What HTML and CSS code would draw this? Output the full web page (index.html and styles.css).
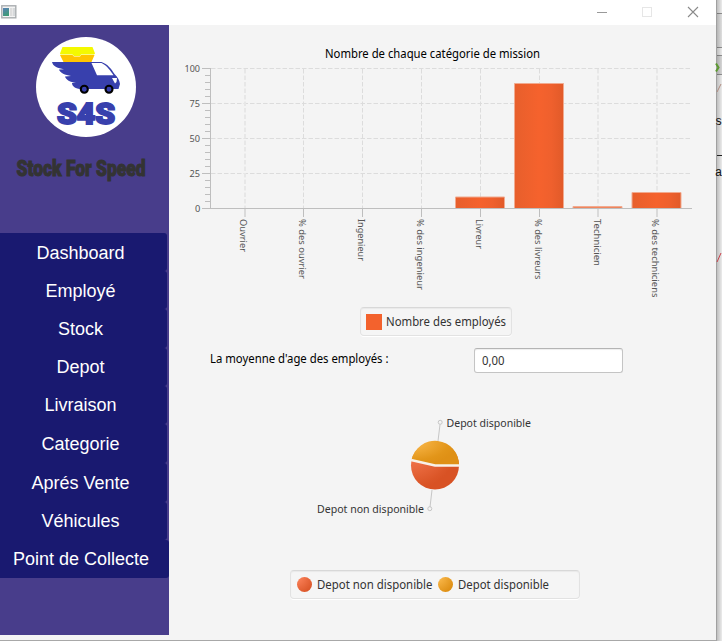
FILE: index.html
```html
<!DOCTYPE html>
<html lang="fr">
<head>
<meta charset="utf-8">
<title>Stock For Speed</title>
<link rel="stylesheet" href="styles.css">
</head>
<body>
<div class="desktop">
<div class="window">
  <header class="titlebar">
    <svg class="app-icon" width="16" height="14" viewBox="0 0 16 14">
      <defs><linearGradient id="ico" x2="0.4" y2="1"><stop stop-color="#5a80b8"/><stop offset="1" stop-color="#3f9a78"/></linearGradient></defs>
      <rect x="0.8" y="0.8" width="14" height="12" fill="#f4f4f4" stroke="#a9adb0" stroke-width="1.4"/>
      <rect x="2" y="3" width="6" height="8" fill="url(#ico)"/>
      <rect x="9" y="3" width="2.5" height="8" fill="#dcdcdc"/>
      <rect x="12.3" y="3" width="1.4" height="8" fill="#c9cdd0"/>
    </svg>
    <svg class="controls" width="102" height="13" viewBox="597 6 102 13" fill="none">
      <path d="M597 12.5h10" stroke="#999"/>
      <rect x="642.5" y="7.5" width="9" height="9" stroke="#e6e6e6"/>
      <path d="M688 7l10 10M698 7l-10 10" stroke="#8a8a8a" stroke-width="1.1"/>
    </svg>
  </header>
  <div class="content">
    <aside class="sidebar">
      <svg class="logo" width="169" height="208" viewBox="0 25 169 208">
        <circle cx="86" cy="87" r="50" fill="#fff"/>
        <path d="M62.5 47h30l2.5 6.5-1 1H81l-1 1.5h-6l-1.500-1.500H60.500l-.5-1z" fill="#f4f900"/>
        <path d="M60 55h12.500l1.500 1.500h6l1-1.500h13.500l-3 7h-28z" fill="#ffc400"/>
        <path d="M52 62h49.500c6 2 10 7 13 12 3.500 3 5 7 5.500 10l-1.500 5H80c-5-.5-8-3-8-6l4-.2c-6-.8-10-2.800-11-6.300l6-.5c-6-1-11-3-12-6.500l5-.3c-6-.9-11-2.500-12-7.200z" fill="#3840ad"/>
        <path d="M91.500 63h10c6 3 9 8 12 12.200H97z" fill="#fff"/>
        <path d="M112 78h5l-.5 4-1.500 1.500z" fill="#fff"/>
        <circle cx="84.300" cy="89.300" r="3.500" fill="#3840ad" stroke="#000" stroke-width="2.100"/>
        <circle cx="109" cy="89.300" r="3.500" fill="#3840ad" stroke="#000" stroke-width="2.100"/>
        <text class="logo-text" x="57" y="124" textLength="58" lengthAdjust="spacingAndGlyphs">S4S</text>
        <text class="brand" x="16.500" y="175.500" textLength="129" lengthAdjust="spacingAndGlyphs">Stock For Speed</text>
      </svg>
      <nav class="menu">
        <a class="item">Dashboard</a>
        <a class="item">Employé</a>
        <a class="item">Stock</a>
        <a class="item">Depot</a>
        <a class="item">Livraison</a>
        <a class="item tall">Categorie</a>
        <a class="item tall">Aprés Vente</a>
        <a class="item">Véhicules</a>
        <a class="item wide">Point de Collecte</a>
      </nav>
    </aside>
    <main class="main">
      <svg class="bar-chart" width="547" height="282" viewBox="169 25 547 282">
        <defs>
          <linearGradient id="bar"><stop stop-color="#e75f2c"/><stop offset=".5" stop-color="#f5622d"/><stop offset=".75" stop-color="#ef602d"/><stop offset="1" stop-color="#e15a29"/></linearGradient>
        </defs>
        <text class="chart-title" x="325" y="58" textLength="215" lengthAdjust="spacingAndGlyphs">Nombre de chaque catégorie de mission</text>
        <g class="grid">
          <path d="M211 68.500h481M211 103.500h481M211 138.500h481M211 173.500h481"/>
          <path d="M303.500 69v139M362.500 69v139M421.500 69v139M480.500 69v139M539.500 69v139"/>
          <path class="soft" d="M245 69v139M598 69v139M657 69v139"/>
        </g>
        <g fill="url(#bar)" stroke="#f1aa8f" stroke-width="1">
          <path d="M455.500 208V197H504.500V208"/>
          <path d="M514.500 208V83.500H563.500V208"/>
          <path d="M573 206.500H622V208H573z"/>
          <path d="M632 208V192.500H681V208"/>
        </g>
        <g class="axis">
          <path d="M210.500 68v141M210 208.500h482"/>
          <path d="M202 68.500h8M202 103.500h8M202 138.500h8M202 173.500h8M202 208.500h8"/>
          <path d="M205 75.500h5M205 82.500h5M205 89.500h5M205 96.500h5M205 110.500h5M205 117.500h5M205 124.500h5M205 131.500h5M205 145.500h5M205 152.500h5M205 159.500h5M205 166.500h5M205 180.500h5M205 187.500h5M205 194.500h5M205 201.500h5"/>
          <path d="M303.500 209v8M362.500 209v8M421.500 209v8M480.500 209v8M539.500 209v8"/>
          <path class="soft-tick" d="M245 209v8M598 209v8M657 209v8"/>
        </g>
        <g class="ylabels">
          <text x="184.500" y="72" textLength="15.500" lengthAdjust="spacingAndGlyphs">100</text>
          <text x="189.500" y="107" textLength="10.500" lengthAdjust="spacingAndGlyphs">75</text>
          <text x="189.500" y="142" textLength="10.500" lengthAdjust="spacingAndGlyphs">50</text>
          <text x="189.500" y="177" textLength="10.500" lengthAdjust="spacingAndGlyphs">25</text>
          <text x="195" y="212" textLength="5.300" lengthAdjust="spacingAndGlyphs">0</text>
        </g>
        <g class="xlabels">
          <text transform="translate(240 219) rotate(90)" textLength="33" lengthAdjust="spacingAndGlyphs">Ouvrier</text>
          <text transform="translate(299 219) rotate(90)" textLength="60" lengthAdjust="spacingAndGlyphs">% des ouvrier</text>
          <text transform="translate(358 219) rotate(90)" textLength="42" lengthAdjust="spacingAndGlyphs">Ingenieur</text>
          <text transform="translate(417 219) rotate(90)" textLength="71" lengthAdjust="spacingAndGlyphs">% des ingenieur</text>
          <text transform="translate(476 219) rotate(90)" textLength="30" lengthAdjust="spacingAndGlyphs">Livreur</text>
          <text transform="translate(535 219) rotate(90)" textLength="60.500" lengthAdjust="spacingAndGlyphs">% des livreurs</text>
          <text transform="translate(594 219) rotate(90)" textLength="47" lengthAdjust="spacingAndGlyphs">Technicien</text>
          <text transform="translate(652 219) rotate(90)" textLength="78.500" lengthAdjust="spacingAndGlyphs">% des techniciens</text>
        </g>
      </svg>
      <div class="legend legend-bar">
        <span class="square"></span>
        <svg width="122" height="20"><text class="label" x="1" y="14" textLength="120" lengthAdjust="spacingAndGlyphs">Nombre des employés</text></svg>
      </div>
      <div class="age-row">
        <svg class="age-label" width="264" height="25"><text class="label black" x="0" y="15" textLength="178.500" lengthAdjust="spacingAndGlyphs">La moyenne d'age des employés :</text></svg>
        <div class="field"><svg width="60" height="22"><text class="label" x="7" y="16" textLength="22.500" lengthAdjust="spacingAndGlyphs">0,00</text></svg></div>
      </div>
      <svg class="pie-chart" width="547" height="197" viewBox="169 373 547 197">
        <defs>
          <radialGradient id="red" cx="0" cy="0" r="1"><stop stop-color="#ff8760"/><stop offset=".9" stop-color="#db5628"/><stop offset="1" stop-color="#d85224"/></radialGradient>
          <radialGradient id="yellow" cx="0" cy="0" r="1"><stop stop-color="#fdbd52"/><stop offset=".8" stop-color="#e29519"/><stop offset="1" stop-color="#df9015"/></radialGradient>
        </defs>
        <circle cx="435" cy="465.500" r="24" fill="url(#red)"/>
        <path d="M435 465.500L411.500 460A24 24 0 0 1 459 465.500z" fill="url(#yellow)"/>
        <path d="M411 460L435 465.500H460" fill="none" stroke="#f8f1e8" stroke-width="2.400"/>
        <g fill="none" stroke="#c6c6c6">
          <path d="M438 441L440 424.500M432 490L430 507"/>
          <circle cx="440.200" cy="422.300" r="2"/><circle cx="429.800" cy="508.700" r="2"/>
        </g>
        <text class="pie-label" x="446.500" y="427" textLength="84.500" lengthAdjust="spacingAndGlyphs">Depot disponible</text>
        <text class="pie-label" x="317" y="513" textLength="107" lengthAdjust="spacingAndGlyphs">Depot non disponible</text>
      </svg>
      <div class="legend legend-pie">
        <span class="dot red"></span>
        <svg width="121" height="20"><text class="label" x="0" y="14" textLength="115.500" lengthAdjust="spacingAndGlyphs">Depot non disponible</text></svg>
        <span class="dot yellow"></span>
        <svg width="96" height="20"><text class="label" x="0" y="14" textLength="91" lengthAdjust="spacingAndGlyphs">Depot disponible</text></svg>
      </div>
    </main>
  </div>
</div>
<svg class="behind" width="5" height="641" viewBox="717 0 5 641">
  <defs><linearGradient id="shade"><stop stop-color="#000" stop-opacity=".24"/><stop offset="1" stop-color="#000" stop-opacity=".06"/></linearGradient></defs>
  <rect x="717" width="5" height="641" fill="#fafafa"/>
  <rect x="717" y="14" width="5" height="34" fill="#eee"/>
  <rect x="717" y="56" width="5" height="18" fill="#e4e4e4"/>
  <path d="M717 13.500h5M717 47.500h5M717 55.500h5M717 74.500h5" stroke="#999"/>
  <rect x="717" width="5" height="641" fill="url(#shade)"/>
  <path d="M716 63.500l2.500 4-2.500 4" fill="none" stroke="#5c9930" stroke-width="2"/>
  <path d="M717 92l4-8" stroke="#b08c80"/>
  <path d="M717 262l4-9" stroke="#c8404a"/>
  <path d="M717 155.500h5" stroke="#222"/>
  <text class="code" x="715" y="125">s</text>
  <text class="code" x="715" y="176">a</text>
</svg>
</div>
</body>
</html>
```
FILE: styles.css
```css
* { box-sizing: border-box; }
body { margin: 0; background: #f4f4f4; font-family: "Noto Sans", "Open Sans", sans-serif; }
svg { display: block; flex: none; overflow: visible; }
.desktop { display: flex; width: 722px; height: 641px; overflow: hidden; }
.window { width: 717px; height: 641px; border-right: 1px solid #a0a0a0; border-bottom: 1px solid #a8a8a8; background: #f4f4f4; }
.titlebar { display: flex; justify-content: space-between; height: 25px; padding: 5px 17px 0 1px; background: #fff; }
.controls { margin-top: 1px; }
.content { display: flex; height: 615px; }
.sidebar { width: 169px; height: 610px; background: #483d8b; }
.menu { display: flex; flex-direction: column; }
.item { display: flex; align-items: center; justify-content: center; width: 167px; height: 38.200px; padding: 2px 6px 0 0; border-radius: 0 3px 3px 0; background: #191970; color: #fff; font: 18px "Liberation Sans", sans-serif; }
.item.tall { height: 38.800px; }
.item.wide { width: 169px; padding-right: 7px; }
.logo-text { font: 900 30px Roboto, sans-serif; fill: #3840ad; stroke: #3840ad; stroke-width: 2px; }
.brand { font: 900 22px Roboto, sans-serif; fill: #333; stroke: #333; stroke-width: 1px; }
.main { width: 547px; }
.chart-title { font-size: 12px; fill: #000; }
.grid path { fill: none; stroke: #dcdcdc; stroke-dasharray: 4.500 2; }
.grid .soft { stroke: #e7e7e7; stroke-width: 2px; }
.axis path { stroke: #bebebe; fill: none; }
.axis .soft-tick { stroke: #dadada; stroke-width: 2px; }
.ylabels, .xlabels { font-size: 9.500px; fill: #555; }
.label { font-size: 12px; fill: #333; }
.black { fill: #000; }
.pie-label { font-size: 11.500px; fill: #333; }
.legend { display: flex; align-items: center; height: 29px; border: 1px solid #e2e2e2; border-top-color: #d8d8d8; border-radius: 4px; background: #f5f5f5; box-shadow: inset 0 1px 1px #e9e9e9, 0 1px 0 #fff; }
.legend-bar { width: 152px; margin-left: 191px; padding-left: 5px; gap: 3px; }
.square { width: 16px; height: 16px; background: #f3622d; }
.age-row { display: flex; align-items: flex-start; margin-top: 12px; padding-left: 41px; }
.field { width: 149px; height: 25px; border: 1px solid #c4c4c4; border-top-color: #b4b4b4; border-radius: 3px; background: #fff; box-shadow: inset 0 1px 1px #eee; }
.legend-pie { width: 290px; margin-left: 121px; padding-left: 6px; }
.dot { flex: none; width: 15px; height: 15px; border-radius: 50%; }
.dot.red { margin-right: 5px; background: radial-gradient(circle at 0 0, #ff8760, #d85224 90%); }
.dot.yellow { margin-right: 5px; background: radial-gradient(circle at 0 0, #fdbd52, #df9015 80%); }
.code { font: 12px "Liberation Mono", monospace; fill: #111; }
```
